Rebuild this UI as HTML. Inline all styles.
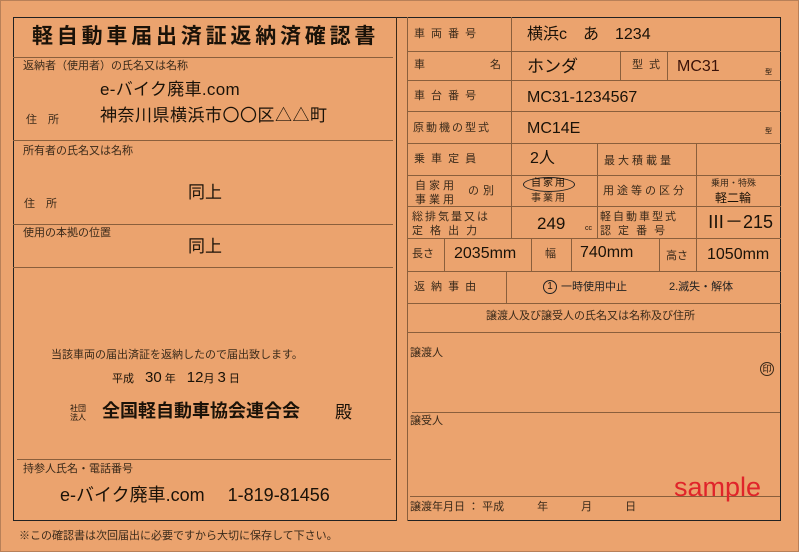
<!DOCTYPE html>
<html><head><meta charset="utf-8"><style>
*{margin:0;padding:0;box-sizing:border-box}
body{width:799px;height:552px;background:#EBA36E;font-family:"Liberation Sans","Noto Sans CJK JP",sans-serif;color:#1a1208;position:relative;overflow:hidden}
.t{position:absolute;white-space:nowrap;line-height:1}
.h{position:absolute;height:1px;background:#8a5f3c}
.v{position:absolute;width:1px;background:#8a5f3c}
.s{font-size:11px;color:#3a2a1a}
.l{font-size:11px;letter-spacing:0.55em;color:#3a2a1a}
.b{font-size:16px}
</style></head><body>
<div style="position:absolute;left:0;top:0;width:799px;height:552px;border:1px solid #b88058"></div>
<div class="h" style="left:13px;top:17px;width:768px;background:#222"></div>
<div class="v" style="left:13px;top:17px;height:504px;background:#222"></div>
<div class="h" style="left:13px;top:520px;width:384px;background:#222"></div>
<div class="v" style="left:396px;top:17px;height:504px;background:#3a2a1a"></div>
<div class="h" style="left:407px;top:520px;width:374px;background:#222"></div>
<div class="v" style="left:780px;top:17px;height:504px;background:#222"></div>
<div class="v" style="left:407px;top:17px;height:504px"></div>

<div class="t" style="left:32px;top:26px;font-size:21px;font-weight:bold;letter-spacing:3.8px">軽自動車届出済証返納済確認書</div>
<div class="h" style="left:13px;top:57px;width:380px"></div>
<div class="t s" style="left:23px;top:61px">返納者（使用者）の氏名又は名称</div>
<div class="t" style="left:100px;top:81px;font-size:17px;letter-spacing:0.3px">e-バイク廃車.com</div>
<div class="t s" style="left:26px;top:115px">住　所</div>
<div class="t" style="left:100px;top:107px;font-size:17px;letter-spacing:0.5px">神奈川県横浜市〇〇区△△町</div>
<div class="h" style="left:13px;top:140px;width:380px"></div>
<div class="t s" style="left:23px;top:146px">所有者の氏名又は名称</div>
<div class="t" style="left:188px;top:184px;font-size:17px">同上</div>
<div class="t s" style="left:24px;top:199px">住　所</div>
<div class="h" style="left:13px;top:224px;width:380px"></div>
<div class="t s" style="left:23px;top:228px">使用の本拠の位置</div>
<div class="t" style="left:188px;top:238px;font-size:17px">同上</div>
<div class="h" style="left:13px;top:267px;width:380px"></div>
<div class="t s" style="left:51px;top:350px">当該車両の届出済証を返納したので届出致します。</div>
<div class="t" style="left:112px;top:370px;font-size:11px">平成　<span style="font-size:15px">30</span> 年　<span style="font-size:15px">12</span>月 <span style="font-size:15px">3</span> 日</div>
<div class="t" style="left:70px;top:404px;font-size:8px;line-height:9px">社団<br>法人</div>
<div class="t" style="left:102px;top:402px;font-size:18px;font-weight:bold">全国軽自動車協会連合会</div>
<div class="t" style="left:335px;top:404px;font-size:17px">殿</div>
<div class="h" style="left:17px;top:459px;width:374px"></div>
<div class="t s" style="left:23px;top:464px">持参人氏名・電話番号</div>
<div class="t" style="left:60px;top:486px;font-size:18px">e-バイク廃車.com　 1-819-81456</div>
<div class="t s" style="left:19px;top:531px">※この確認書は次回届出に必要ですから大切に保存して下さい。</div>

<div class="h" style="left:407px;top:51px;width:374px"></div>
<div class="h" style="left:407px;top:80px;width:374px"></div>
<div class="h" style="left:407px;top:111px;width:374px"></div>
<div class="h" style="left:407px;top:143px;width:374px"></div>
<div class="h" style="left:407px;top:175px;width:374px"></div>
<div class="h" style="left:407px;top:206px;width:374px"></div>
<div class="h" style="left:407px;top:238px;width:374px"></div>
<div class="h" style="left:407px;top:271px;width:374px"></div>
<div class="h" style="left:407px;top:303px;width:374px"></div>
<div class="h" style="left:407px;top:332px;width:374px"></div>
<div class="h" style="left:412px;top:412px;width:368px"></div>
<div class="h" style="left:410px;top:496px;width:370px"></div>
<div class="v" style="left:511px;top:17px;height:221px"></div>
<div class="v" style="left:620px;top:51px;height:29px"></div>
<div class="v" style="left:667px;top:51px;height:29px"></div>
<div class="v" style="left:597px;top:143px;height:95px"></div>
<div class="v" style="left:696px;top:143px;height:95px"></div>
<div class="v" style="left:444px;top:238px;height:33px"></div>
<div class="v" style="left:531px;top:238px;height:33px"></div>
<div class="v" style="left:571px;top:238px;height:33px"></div>
<div class="v" style="left:659px;top:238px;height:33px"></div>
<div class="v" style="left:696px;top:238px;height:33px"></div>
<div class="v" style="left:506px;top:271px;height:32px"></div>

<div class="t l" style="left:414px;top:29px">車両番号</div>
<div class="t b" style="left:527px;top:27px">横浜c　あ　1234</div>
<div class="t s" style="left:414px;top:60px">車</div><div class="t s" style="left:490px;top:60px">名</div>
<div class="t b" style="left:527px;top:58px;font-size:17px">ホンダ</div>
<div class="t l" style="left:632px;top:60px">型式</div>
<div class="t b" style="left:677px;top:59px;color:#3a1208">MC31</div>
<div class="t" style="left:765px;top:69px;font-size:7px">型</div>
<div class="t l" style="left:414px;top:91px">車台番号</div>
<div class="t b" style="left:527px;top:90px">MC31-1234567</div>
<div class="t" style="left:413px;top:123px;font-size:11px;letter-spacing:2px;color:#3a2a1a">原動機の型式</div>
<div class="t b" style="left:527px;top:121px">MC14E</div>
<div class="t" style="left:765px;top:128px;font-size:7px">型</div>
<div class="t l" style="left:414px;top:154px">乗車定員</div>
<div class="t b" style="left:530px;top:151px">2人</div>
<div class="t" style="left:604px;top:156px;font-size:11px;letter-spacing:3px;color:#3a2a1a">最大積載量</div>
<div class="t" style="left:415px;top:179px;font-size:11px;letter-spacing:3px;line-height:14px;color:#3a2a1a">自家用<br>事業用</div>
<div class="t" style="left:468px;top:186px;font-size:11px;letter-spacing:4px;color:#3a2a1a">の別</div>
<div style="position:absolute;left:523px;top:177px;width:52px;height:15px;border:1px solid #222;border-radius:50%"></div>
<div class="t" style="left:531px;top:179px;font-size:10px;letter-spacing:2px">自家用</div>
<div class="t" style="left:531px;top:194px;font-size:10px;letter-spacing:2px;color:#3a2a1a">事業用</div>
<div class="t" style="left:603px;top:186px;font-size:11px;letter-spacing:3px;color:#3a2a1a">用途等の区分</div>
<div class="t" style="left:711px;top:179px;font-size:9px;color:#3a2a1a">乗用・特殊</div>
<div class="t" style="left:715px;top:192px;font-size:12px">軽二輪</div>
<div class="t" style="left:412px;top:210px;font-size:11px;letter-spacing:2px;line-height:14px;color:#3a2a1a">総排気量又は<br>定 格 出 力</div>
<div class="t b" style="left:537px;top:215px;font-size:17px">249</div>
<div class="t" style="left:585px;top:225px;font-size:7px">cc</div>
<div class="t" style="left:600px;top:210px;font-size:11px;letter-spacing:2px;line-height:14px;color:#3a2a1a">軽自動車型式<br>認 定 番 号</div>
<div class="t b" style="left:707px;top:213px;font-size:18px">Ⅲ－215</div>
<div class="t s" style="left:412px;top:249px">長さ</div>
<div class="t b" style="left:454px;top:246px">2035mm</div>
<div class="t s" style="left:545px;top:249px">幅</div>
<div class="t b" style="left:580px;top:245px">740mm</div>
<div class="t s" style="left:666px;top:251px">高さ</div>
<div class="t b" style="left:707px;top:247px">1050mm</div>
<div class="t l" style="left:414px;top:282px">返納事由</div>
<div style="position:absolute;left:543px;top:280px;width:14px;height:14px;border:1px solid #222;border-radius:50%;font-size:10px;text-align:center;line-height:12px">1</div>
<div class="t s" style="left:561px;top:282px;color:#222">一時使用中止</div>
<div class="t s" style="left:669px;top:282px;color:#222">2.滅失・解体</div>
<div class="t s" style="left:486px;top:311px">譲渡人及び譲受人の氏名又は名称及び住所</div>
<div class="t s" style="left:410px;top:348px">譲渡人</div>
<div style="position:absolute;left:760px;top:362px;width:14px;height:14px;border:1px solid #3a2a1a;border-radius:50%;font-size:9px;text-align:center;line-height:12px">印</div>
<div class="t s" style="left:410px;top:416px">譲受人</div>
<div class="t" style="left:674px;top:474px;font-size:27px;color:#e0242a">sample</div>
<div class="t s" style="left:410px;top:502px">譲渡年月日 ： 平成　　　年　　　月　　　日</div>
</body></html>
